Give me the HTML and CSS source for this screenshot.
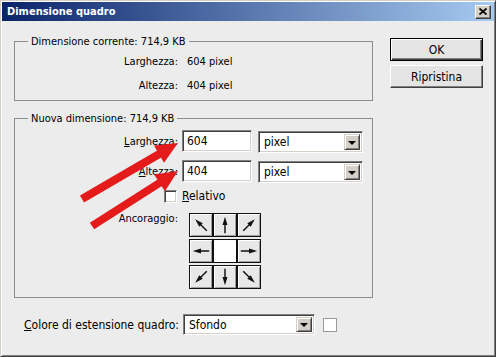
FILE: index.html
```html
<!DOCTYPE html>
<html lang="it">
<head>
    <meta charset="UTF-8">
    <meta name="viewport" content="width=device-width, initial-scale=1.0">
    <title>Dimensione quadro</title>
    <link rel="stylesheet" href="styles.css">
</head>
<body>
    <div class="window">
        <div class="titlebar">
            <span class="title">Dimensione quadro</span>
            <span class="close">
                <svg width="8" height="7" viewBox="0 0 8 7"><path d="M0.5 0.5 L7.5 6.5 M7.5 0.5 L0.5 6.5" stroke="#000" stroke-width="1.7"/></svg>
            </span>
        </div>

        <div class="content">
            <div class="groups">
                <fieldset class="group current">
                    <legend>Dimensione corrente: 714,9 KB</legend>
                    <div class="row"><span class="label">Larghezza:</span><span class="value">604 pixel</span></div>
                    <div class="row"><span class="label">Altezza:</span><span class="value">404 pixel</span></div>
                </fieldset>

                <fieldset class="group newsize">
                    <legend>Nuova dimensione: 714,9 KB</legend>
                    <div class="form">
                        <span class="label"><u>L</u>arghezza:</span>
                        <div class="controls">
                            <span class="field">604</span>
                            <span class="select unit"><span class="text">pixel</span><span class="drop"></span></span>
                        </div>

                        <span class="label"><u>A</u>ltezza:</span>
                        <div class="controls">
                            <span class="field">404</span>
                            <span class="select unit"><span class="text">pixel</span><span class="drop"></span></span>
                        </div>

                        <span class="label check-cell"><span class="checkbox"></span></span>
                        <span class="check-text"><u>R</u>elativo</span>

                        <span class="label anchor-label">Ancoraggio:</span>
                        <div class="anchor">
                            <span class="cell nw"><svg viewBox="0 0 22 22"><path d="M11 20 L11 9" stroke="#111" stroke-width="1.6"/><polygon points="11,2 8.3,11 13.7,11" fill="#111"/></svg></span>
                            <span class="cell n"><svg viewBox="0 0 22 22"><path d="M11 20 L11 9" stroke="#111" stroke-width="1.6"/><polygon points="11,2 8.3,11 13.7,11" fill="#111"/></svg></span>
                            <span class="cell ne"><svg viewBox="0 0 22 22"><path d="M11 20 L11 9" stroke="#111" stroke-width="1.6"/><polygon points="11,2 8.3,11 13.7,11" fill="#111"/></svg></span>
                            <span class="cell w"><svg viewBox="0 0 22 22"><path d="M11 20 L11 9" stroke="#111" stroke-width="1.6"/><polygon points="11,2 8.3,11 13.7,11" fill="#111"/></svg></span>
                            <span class="cell center"></span>
                            <span class="cell e"><svg viewBox="0 0 22 22"><path d="M11 20 L11 9" stroke="#111" stroke-width="1.6"/><polygon points="11,2 8.3,11 13.7,11" fill="#111"/></svg></span>
                            <span class="cell sw"><svg viewBox="0 0 22 22"><path d="M11 20 L11 9" stroke="#111" stroke-width="1.6"/><polygon points="11,2 8.3,11 13.7,11" fill="#111"/></svg></span>
                            <span class="cell s"><svg viewBox="0 0 22 22"><path d="M11 20 L11 9" stroke="#111" stroke-width="1.6"/><polygon points="11,2 8.3,11 13.7,11" fill="#111"/></svg></span>
                            <span class="cell se"><svg viewBox="0 0 22 22"><path d="M11 20 L11 9" stroke="#111" stroke-width="1.6"/><polygon points="11,2 8.3,11 13.7,11" fill="#111"/></svg></span>
                        </div>
                    </div>
                </fieldset>
            </div>

            <div class="buttons">
                <div class="btn default"><span>OK</span></div>
                <div class="btn"><span>Ripristina</span></div>
            </div>
        </div>

        <div class="footer">
            <span class="footer-label"><u>C</u>olore di estensione quadro:</span>
            <span class="select fill"><span class="text">Sfondo</span><span class="drop"></span></span>
            <span class="swatch"></span>
        </div>

        <!-- annotation arrows drawn over the dialog -->
        <svg class="arrows" width="496" height="357" viewBox="0 0 496 357">
            <path d="M82 199 L161 153" stroke="#e51b1b" stroke-width="8"/>
            <polygon points="178,143 164,162.7 154,145.5" fill="#e51b1b"/>
            <path d="M92 226 L161 182" stroke="#e51b1b" stroke-width="8"/>
            <polygon points="178,171 164.9,191.3 154.1,174.5" fill="#e51b1b"/>
        </svg>
    </div>
</body>
</html>
```

FILE: styles.css
```css
body {
    margin: 0;
    padding: 0;
    background-color: #ececec;
    font-family: "DejaVu Sans Condensed", "DejaVu Sans", sans-serif;
    font-size: 11px;
    color: #000;
}
.window {
    position: relative;
    box-sizing: border-box;
    width: 496px;
    height: 357px;
    background-color: #ececec;
    border: 1px solid;
    border-color: #d4d0c8 #404040 #404040 #d4d0c8;
    box-shadow: inset 1px 1px #ffffff, inset -1px -1px #808080;
}
.titlebar {
    display: flex;
    align-items: center;
    justify-content: space-between;
    height: 19px;
    margin: 1px 1px 0 1px;
    padding: 0 3px 0 5px;
    background: linear-gradient(to right, #0a246a, #a6caf0);
}
.title {
    color: #fff;
    font-weight: bold;
}
.close {
    display: flex;
    align-items: center;
    justify-content: center;
    box-sizing: border-box;
    width: 16px;
    height: 14px;
    background-color: #d4d0c8;
    border: 1px solid;
    border-color: #fff #404040 #404040 #fff;
    box-shadow: inset -1px -1px #808080;
}
.content {
    display: flex;
    padding: 14px 0 0 13px;
}
.groups {
    width: 359px;
}
.group {
    margin: 0;
    padding: 0;
    min-width: 0;
    border: 1px solid #8d8d8d;
}
.group legend {
    margin-left: 13px;
    padding: 0 3px;
    line-height: 13px;
}
.current {
    padding: 1px 0 3px 0;
}
.row {
    display: grid;
    grid-template-columns: 163px auto;
    column-gap: 9px;
    height: 24px;
    align-items: center;
}
.label {
    text-align: right;
}
.newsize {
    margin-top: 11px;
    padding: 5px 0 8px 0;
}
.form {
    display: grid;
    grid-template-columns: 163px auto;
    column-gap: 4px;
    align-items: center;
}
.controls {
    display: flex;
    gap: 6px;
    height: 22px;
}
.controls + .label,
.controls + .label + .controls {
    margin-top: 8px;
}
.field {
    box-sizing: border-box;
    width: 70px;
    height: 22px;
    padding: 0 4px;
    line-height: 20px;
    font-size: 12px;
    background-color: #fff;
    border: 1px solid;
    border-color: #808080 #fff #fff #808080;
    box-shadow: inset 1px 1px #404040, inset -1px -1px #d4d0c8;
}
.select {
    display: flex;
    align-items: center;
    justify-content: space-between;
    box-sizing: border-box;
    padding: 2px;
    background-color: #fff;
    border: 1px solid;
    border-color: #808080 #fff #fff #808080;
    box-shadow: inset 1px 1px #404040, inset -1px -1px #d4d0c8;
}
.select .text {
    padding-left: 3px;
    font-size: 12px;
}
.unit {
    width: 105px;
    height: 22px;
    margin-top: 1px;
}
.drop {
    box-sizing: border-box;
    width: 16px;
    height: 100%;
    background-color: #d4d0c8;
    border: 1px solid;
    border-color: #d4d0c8 #404040 #404040 #d4d0c8;
    box-shadow: inset 1px 1px #fff, inset -1px -1px #808080;
    display: flex;
    align-items: center;
    justify-content: center;
}
.drop::after {
    content: "";
    border-left: 4px solid transparent;
    border-right: 4px solid transparent;
    border-top: 4px solid #000;
    margin-top: 1px;
}
.check-cell {
    display: flex;
    justify-content: flex-end;
    margin-top: 6px;
}
.checkbox {
    box-sizing: border-box;
    width: 13px;
    height: 13px;
    margin-right: 1px;
    background-color: #fff;
    border: 1px solid;
    border-color: #808080 #fff #fff #808080;
    box-shadow: inset 1px 1px #404040, inset -1px -1px #d4d0c8;
}
.check-text {
    margin-top: 6px;
    font-size: 12px;
}
.anchor-label {
    align-self: start;
    margin-top: 9px;
}
.anchor {
    display: grid;
    grid-template-columns: repeat(3, 24px);
    grid-auto-rows: 24px;
    row-gap: 2px;
    margin: 10px 0 0 7px;
    width: 72px;
}
.cell {
    box-sizing: border-box;
    display: flex;
    align-items: center;
    justify-content: center;
    border: 1px solid #111;
    background-color: #e8e8e8;
    box-shadow: inset 1px 1px #fff, inset -1px -1px #a0a0a0;
}
.cell svg {
    width: 20px;
    height: 20px;
}
.cell.center {
    background-color: #fff;
    box-shadow: none;
}
.nw svg { transform: rotate(-45deg); }
.ne svg { transform: rotate(45deg); }
.w svg { transform: rotate(-90deg); }
.e svg { transform: rotate(90deg); }
.sw svg { transform: rotate(-135deg); }
.s svg { transform: rotate(180deg); }
.se svg { transform: rotate(135deg); }
.buttons {
    display: flex;
    flex-direction: column;
    gap: 4px;
    margin: 3px 0 0 17px;
}
.btn {
    box-sizing: border-box;
    width: 93px;
    height: 23px;
    display: flex;
    align-items: center;
    justify-content: center;
    font-size: 12px;
    background-color: #e4e4e4;
    border: 1px solid;
    border-color: #fff #404040 #404040 #fff;
    box-shadow: inset -1px -1px #808080;
}
.btn.default {
    border: 1px solid #000;
    box-shadow: inset 1px 1px #fff, inset -1px -1px #404040, inset -2px -2px #808080;
}
.footer {
    display: flex;
    align-items: center;
    margin-top: 16px;
    padding-left: 23px;
}
.footer-label {
    width: 159px;
    font-size: 12px;
}
.fill {
    width: 132px;
    height: 21px;
}
.swatch {
    box-sizing: border-box;
    width: 14px;
    height: 14px;
    margin-left: 8px;
    background-color: #fff;
    border: 1px solid #9a9a9a;
}
.arrows {
    position: absolute;
    top: -1px;
    left: -1px;
    pointer-events: none;
}
```
